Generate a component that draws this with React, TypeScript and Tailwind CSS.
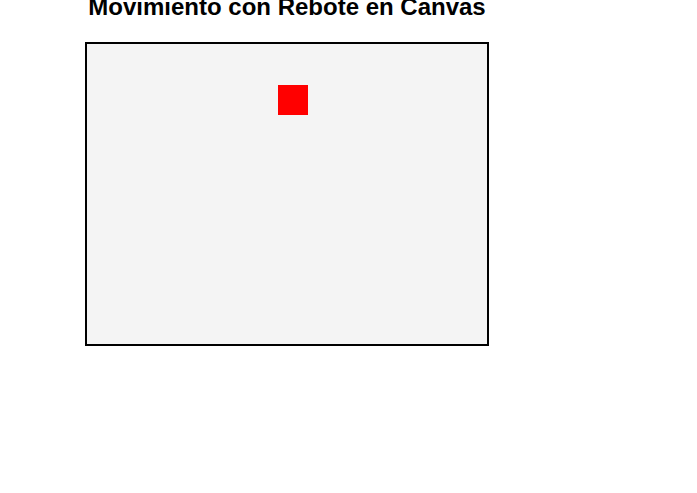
export default function App() {
  return (
    <div className="min-h-[493px] bg-white font-['Liberation_Sans',Arial,sans-serif] text-black">
      <div className="ml-[85px] w-[404px] flex flex-col items-center">
        {/* Título */}
        <h1 className="-mt-[9px] text-2xl leading-8 font-bold whitespace-nowrap">
          Movimiento con Rebote en Canvas
        </h1>

        {/* Lienzo */}
        <div className="mt-[19px] w-[404px] h-[304px] border-2 border-black bg-[#f4f4f4] relative">
          <div className="absolute left-[191px] top-[41px] w-[30px] h-[30px] bg-[#ff0000]" />
        </div>
      </div>
    </div>
  );
}
